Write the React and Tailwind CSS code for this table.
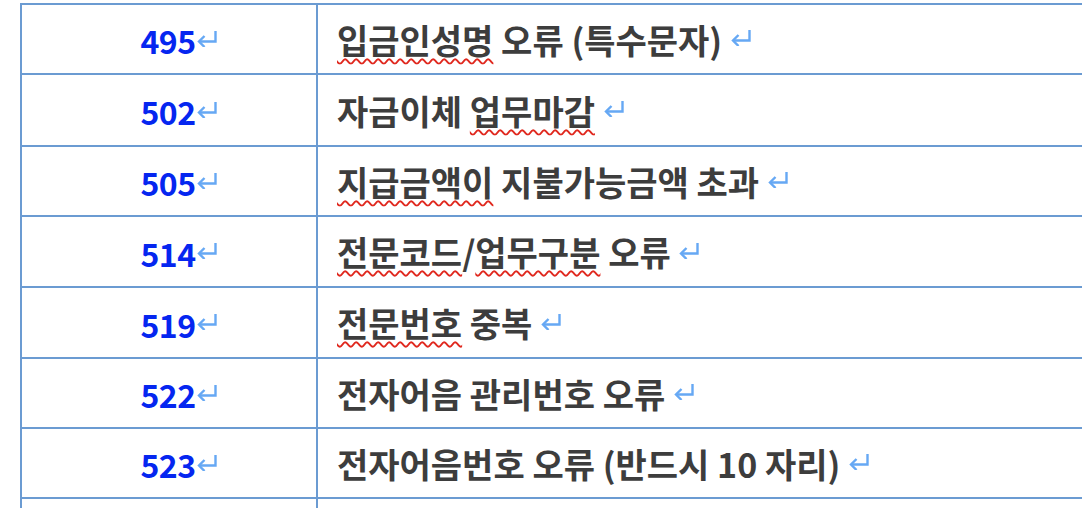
import React from 'react'

const rows = [
  { code: '495', h: 'h-[70px]', parts: [['입금인성명', true], [' 오류 (특수문자)', false]] },
  { code: '502', h: 'h-[72px]', parts: [['자금이체 ', false], ['업무마감', true]] },
  { code: '505', h: 'h-[70px]', parts: [['지급금액이', true], [' 지불가능금액 초과', false]] },
  { code: '514', h: 'h-[71px]', parts: [['전문코드', true], ['/', false], ['업무구분', true], [' 오류', false]] },
  { code: '519', h: 'h-[71px]', parts: [['전문번호', true], [' 중복', false]] },
  { code: '522', h: 'h-[70px]', parts: [['전자어음 관리번호 오류', false]] },
  { code: '523', h: 'h-[70px]', parts: [['전자어음번호 오류 (반드시 10 자리)', false]] },
]

function ReturnMark() {
  return (
    <svg width="22" height="17" viewBox="0 0 22 17" className="block shrink-0">
      <path d="M19.5 1 V11.5 H3" fill="none" stroke="#66a8f4" strokeWidth="2.4" />
      <path d="M8.5 6 L3 11.5 L8.5 17" fill="none" stroke="#66a8f4" strokeWidth="2.4" />
    </svg>
  )
}

export default function App() {
  return (
    <div
      className="w-[1082px] h-[508px] overflow-hidden bg-white pt-[3px] pl-[20px]"
      style={{ fontFamily: "'Noto Sans CJK KR', 'Noto Sans', sans-serif" }}
    >
      <div className="w-[1100px] border-l-2 border-t-2 border-[#6b9bd2]">
        {rows.map((r) => (
          <div key={r.code} className={`flex border-b-2 border-[#6b9bd2] ${r.h}`}>
            <div className="w-[296px] shrink-0 border-r-2 border-[#6b9bd2] flex items-center justify-center pl-[20px] pt-[2px]">
              <span className="text-[32px] font-bold text-[#0526f0] leading-none tracking-[-0.5px]">{r.code}</span>
              <span className="mt-[-4px]"><ReturnMark /></span>
            </div>
            <div className="flex-1 flex items-center pl-[19px] pt-[1px]">
              <span className="text-[34px] font-bold text-[#3d3d3d] leading-none whitespace-pre">
                {r.parts.map(([t, wavy], i) => (
                  <span
                    key={i}
                    className={wavy ? 'underline decoration-wavy decoration-[#e0281e] decoration-[2px] underline-offset-[4px]' : ''}
                  >
                    {t}
                  </span>
                ))}
                {' '}
              </span>
              <span className="mt-[-4px]"><ReturnMark /></span>
            </div>
          </div>
        ))}
        <div className="flex h-[40px]">
          <div className="w-[296px] shrink-0 border-r-2 border-[#6b9bd2]" />
          <div className="flex-1" />
        </div>
      </div>
    </div>
  )
}
